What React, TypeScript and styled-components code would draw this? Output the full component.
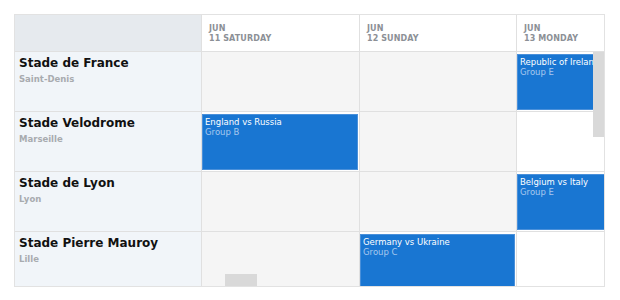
import styled, { createGlobalStyle } from "styled-components";

const GlobalStyle = createGlobalStyle`
    body {
        margin: 0;
        background: #ffffff;
        font-family: "DejaVu Sans", Verdana, sans-serif;
    }
`;

const Page = styled.div`
    padding: 14px;
`;

const Scheduler = styled.div`
    position: relative;
    width: 589px;
    height: 271px;
    border: 1px solid #e2e2e2;
    overflow: hidden;
`;

const Grid = styled.div`
    display: grid;
    grid-template-columns: 187px 158px 157px 157px;
    grid-template-rows: 37px repeat(4, 60px);
`;

const Corner = styled.div`
    background: #e6eaee;
    border-right: 1px solid #e0e0e0;
    border-bottom: 1px solid #e0e0e0;
`;

const DayHeader = styled.div`
    background: #ffffff;
    border-right: 1px solid #e0e0e0;
    border-bottom: 1px solid #e0e0e0;
    padding: 9px 7px 0;
    font-size: 8px;
    font-weight: bold;
    line-height: 10px;
    color: #8c9096;
    letter-spacing: 0.1px;
`;

const VenueCell = styled.div`
    background: #f1f5f9;
    border-right: 1px solid #e0e0e0;
    border-bottom: 1px solid #e0e0e0;
    padding: 3px 4px 0;
`;

const VenueName = styled.div`
    font-size: 12px;
    font-weight: bold;
    color: #111111;
    line-height: 17px;
`;

const VenueCity = styled.div`
    font-size: 8.5px;
    font-weight: bold;
    color: #a8abaf;
    margin-top: 2px;
`;

const Slot = styled.div<{ $weekend: boolean }>`
    background: ${(p) => (p.$weekend ? "#f5f5f5" : "#ffffff")};
    border-right: 1px solid #e0e0e0;
    border-bottom: 1px solid #e0e0e0;
    padding: 2px 1px 1px 0;
    overflow: hidden;
`;

const Match = styled.div`
    height: 100%;
    box-sizing: border-box;
    background: #1976d2;
    border: 1px solid #4a90da;
    padding: 2px 2px;
    font-size: 8.5px;
    line-height: 10px;
    white-space: nowrap;
    overflow: hidden;
`;

const MatchTitle = styled.div`
    color: #ffffff;
`;

const MatchGroup = styled.div`
    color: #a7c8ee;
`;

const ThumbV = styled.div`
    position: absolute;
    right: 0;
    top: 37px;
    width: 11px;
    height: 85px;
    background: #d9d9d9;
`;

const ThumbH = styled.div`
    position: absolute;
    left: 210px;
    bottom: 0;
    width: 32px;
    height: 12px;
    background: #d9d9d9;
`;

const days = [
    { month: "JUN", label: "11 SATURDAY", weekend: true },
    { month: "JUN", label: "12 SUNDAY", weekend: true },
    { month: "JUN", label: "13 MONDAY", weekend: false },
];

type Game = { day: number; title: string; group: string };

const venues: { name: string; city: string; games: Game[] }[] = [
    { name: "Stade de France", city: "Saint-Denis", games: [{ day: 2, title: "Republic of Ireland vs Sweden", group: "Group E" }] },
    { name: "Stade Velodrome", city: "Marseille", games: [{ day: 0, title: "England vs Russia", group: "Group B" }] },
    { name: "Stade de Lyon", city: "Lyon", games: [{ day: 2, title: "Belgium vs Italy", group: "Group E" }] },
    { name: "Stade Pierre Mauroy", city: "Lille", games: [{ day: 1, title: "Germany vs Ukraine", group: "Group C" }] },
];

export default function App() {
    return (
        <Page>
            <GlobalStyle />
            <Scheduler>
                <Grid>
                    <Corner />
                    {days.map((d) => (
                        <DayHeader key={d.label}>
                            <div>{d.month}</div>
                            <div>{d.label}</div>
                        </DayHeader>
                    ))}
                    {venues.map((v) => [
                        <VenueCell key={v.name}>
                            <VenueName>{v.name}</VenueName>
                            <VenueCity>{v.city}</VenueCity>
                        </VenueCell>,
                        ...days.map((d, i) => {
                            const game = v.games.find((g) => g.day === i);
                            return (
                                <Slot key={v.name + i} $weekend={d.weekend && !game}>
                                    {game && (
                                        <Match>
                                            <MatchTitle>{game.title}</MatchTitle>
                                            <MatchGroup>{game.group}</MatchGroup>
                                        </Match>
                                    )}
                                </Slot>
                            );
                        }),
                    ])}
                </Grid>
                <ThumbV />
                <ThumbH />
            </Scheduler>
        </Page>
    );
}
